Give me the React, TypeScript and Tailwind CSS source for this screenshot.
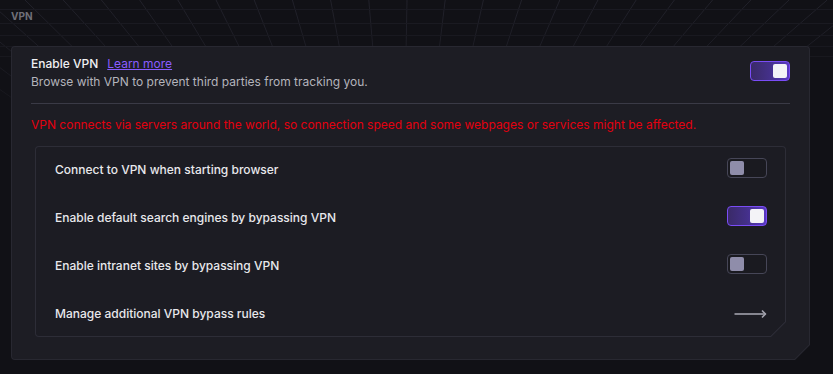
import React from 'react'

const VP_X = 400
const VP_Y = 370

function GridBackdrop() {
  // perspective grid behind the page, fades out toward the cards
  const tops: number[] = []
  for (let k = -14; k <= 12; k++) tops.push(407 + k * 38.2)
  const endY = 160
  return (
    <svg
      className="pointer-events-none absolute inset-0"
      width="833"
      height="374"
      viewBox="0 0 833 374"
    >
      <defs>
        <linearGradient id="fade" x1="0" y1="0" x2="0" y2="1">
          <stop offset="0" stopColor="#fff" stopOpacity="1" />
          <stop offset="0.35" stopColor="#fff" stopOpacity="0.7" />
          <stop offset="1" stopColor="#fff" stopOpacity="0" />
        </linearGradient>
        <mask id="gridMask" maskUnits="userSpaceOnUse" x="0" y="0" width="833" height={endY}>
          <rect x="0" y="0" width="833" height={endY} fill="url(#fade)" />
        </mask>
      </defs>
      <g mask="url(#gridMask)" stroke="#22222b" strokeWidth="1" fill="none">
        {tops.map((x0) => {
          const x1 = VP_X + (x0 - VP_X) * (1 - endY / VP_Y)
          return <line key={x0} x1={x0} y1={0} x2={x1} y2={endY} />
        })}
        {[9.5, 23.5, 35.5, 46.5, 56.5].map((y) => (
          <line key={y} x1={0} y1={y} x2={833} y2={y} stroke="#1b1b23" />
        ))}
      </g>
    </svg>
  )
}

function Toggle({ on }: { on: boolean }) {
  if (on) {
    return (
      <div className="flex h-5 w-10 shrink-0 items-center justify-end rounded-[4px] border border-[#7a4cf6] bg-gradient-to-r from-[#3a2a68] via-[#44308a] to-[#5a38c4] pr-[2px]">
        <div className="h-[14px] w-[14px] rounded-[2px] bg-[#f3f3f7]" />
      </div>
    )
  }
  return (
    <div className="flex h-5 w-10 shrink-0 items-center rounded-[4px] border border-[#464657] bg-[#1a1a20] pl-[2px]">
      <div className="h-[14px] w-[14px] rounded-[2px] bg-[#8f8daa]" />
    </div>
  )
}

function ArrowRight() {
  return (
    <svg width="33" height="10" viewBox="0 0 33 10" fill="none" className="shrink-0">
      <path d="M0.5 5H31.5" stroke="#a2a2ad" strokeWidth="1.6" />
      <path d="M28 1.5L31.5 5L28 8.5" stroke="#a2a2ad" strokeWidth="1.6" strokeLinejoin="round" />
    </svg>
  )
}

const rows = [
  { label: 'Connect to VPN when starting browser', on: false },
  { label: 'Enable default search engines by bypassing VPN', on: true },
  { label: 'Enable intranet sites by bypassing VPN', on: false },
]

export default function App() {
  return (
    <div className="relative h-[374px] overflow-hidden bg-[#111116] font-['Inter','Noto_Sans',sans-serif]">
      <GridBackdrop />
      <div className="relative pl-[11px] pr-[23px] pt-[10px]">
        <h2 className="text-[10px] font-bold leading-[12px] text-[#6f6f78]">VPN</h2>

        {/* outer card */}
        <div className="mt-[24px] rounded-[4px] bg-[#282831] p-px [clip-path:polygon(0_0,100%_0,100%_calc(100%-15px),calc(100%-15px)_100%,0_100%)]">
          <div className="rounded-[3px] bg-[#1d1d24] px-[19px] pb-[22px] pt-[8px] [clip-path:polygon(0_0,100%_0,100%_calc(100%-14.5px),calc(100%-14.5px)_100%,0_100%)]">
            <div className="flex items-start justify-between">
              <div className="text-[12px] leading-[18px]">
                <div className="flex items-center gap-[9px]">
                  <span className="font-medium text-[#f0f0f3]">Enable VPN</span>
                  <a href="#" className="text-[#8a5cff] underline">
                    Learn more
                  </a>
                </div>
                <p className="text-[#b4b4bc]">Browse with VPN to prevent third parties from tracking you.</p>
              </div>
              <div className="mt-[6px]">
                <Toggle on={true} />
              </div>
            </div>

            <div className="mt-[12px] h-px bg-[#3a3a46]" />

            <p className="mt-[12px] text-[12px] leading-[18px] text-[#e3000f]">
              VPN connects via servers around the world, so connection speed and some webpages or services might be
              affected.
            </p>

            {/* inner card */}
            <div className="mx-[4px] mt-[12px] rounded-[4px] bg-[#2d2d37] p-px [clip-path:polygon(0_0,100%_0,100%_calc(100%-15px),calc(100%-15px)_100%,0_100%)]">
              <div className="flow-root h-[189px] rounded-[3px] bg-[#1c1c23] pl-[19px] pr-[18px] [clip-path:polygon(0_0,100%_0,100%_calc(100%-14.5px),calc(100%-14.5px)_100%,0_100%)]">
                <div className="-mt-px">
                  {rows.map((r) => (
                    <div key={r.label} className="flex h-12 items-center justify-between">
                      <span className="text-[12px] font-medium text-[#e8e8ec]">{r.label}</span>
                      <div className="mb-[5px]">
                        <Toggle on={r.on} />
                      </div>
                    </div>
                  ))}
                  <div className="flex h-12 items-center justify-between">
                    <span className="text-[12px] font-medium text-[#e8e8ec]">Manage additional VPN bypass rules</span>
                    <ArrowRight />
                  </div>
                </div>
              </div>
            </div>
          </div>
        </div>
      </div>
    </div>
  )
}
